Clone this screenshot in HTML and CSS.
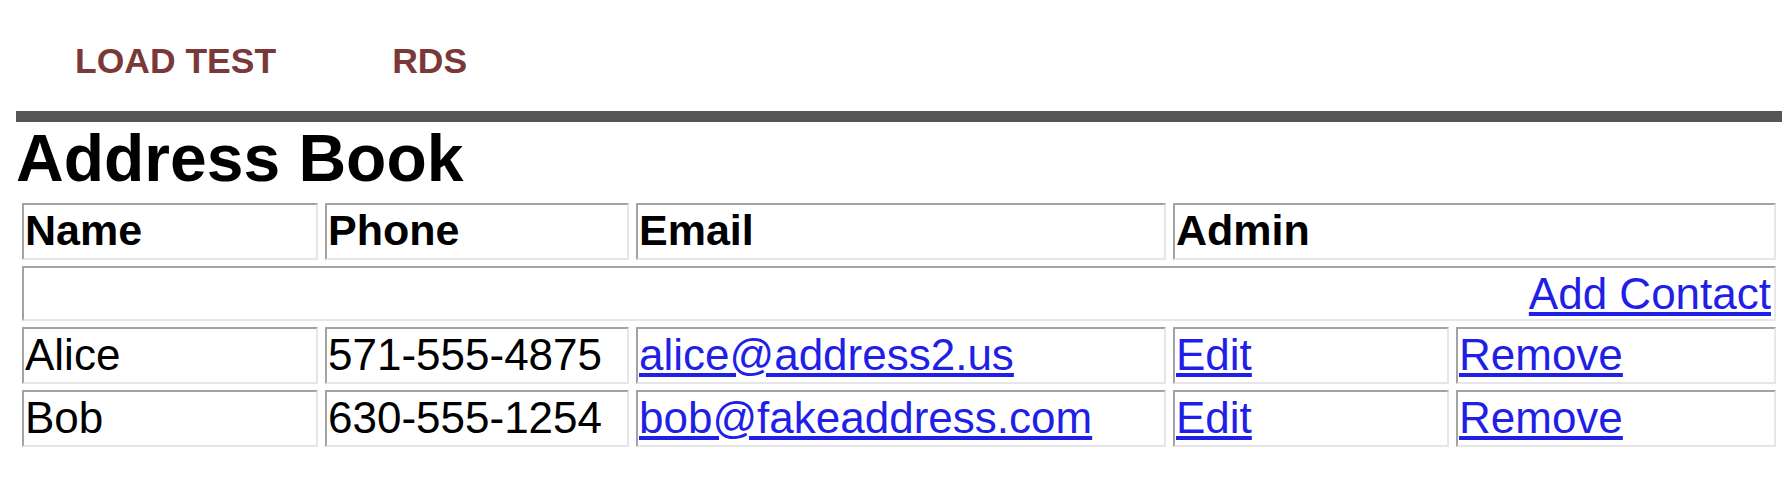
FILE: index.html
```html
<!DOCTYPE html>
<html>
<head>
<meta charset="utf-8">
<title>Address Book</title>
<link rel="stylesheet" href="styles.css">
</head>
<body>
<nav class="topbar">
  <a class="navlink" href="#">LOAD TEST</a>
  <a class="navlink" href="#">RDS</a>
</nav>
<div class="rule"></div>
<h1 class="title">Address Book</h1>
<table class="book">
  <colgroup>
    <col class="c-name">
    <col class="c-phone">
    <col class="c-email">
    <col class="c-edit">
    <col class="c-remove">
  </colgroup>
  <thead>
    <tr>
      <th>Name</th>
      <th>Phone</th>
      <th>Email</th>
      <th colspan="2">Admin</th>
    </tr>
  </thead>
  <tbody>
    <tr>
      <td colspan="5" class="add"><a href="#">Add Contact</a></td>
    </tr>
    <tr>
      <td>Alice</td>
      <td>571-555-4875</td>
      <td><a href="#">alice@address2.us</a></td>
      <td><a href="#">Edit</a></td>
      <td><a href="#">Remove</a></td>
    </tr>
    <tr>
      <td>Bob</td>
      <td>630-555-1254</td>
      <td><a href="#">bob@fakeaddress.com</a></td>
      <td><a href="#">Edit</a></td>
      <td><a href="#">Remove</a></td>
    </tr>
  </tbody>
</table>
</body>
</html>
```

FILE: styles.css
```css
html, body {
  margin: 0;
  padding: 0;
  background: #ffffff;
}

body {
  font-family: "Liberation Sans", Arial, sans-serif;
  color: #000;
}

.topbar {
  display: flex;
  gap: 116px;
  padding: 41px 0 30px 75px;
}

.navlink {
  font-size: 35.5px;
  line-height: 40px;
  font-weight: bold;
  color: #7a3838;
  text-decoration: none;
}

.rule {
  height: 11px;
  background: #555555;
  margin: 0 2px 0 16px;
}

.title {
  margin: 3px 0 0 16px;
  font-size: 66px;
  line-height: 66px;
  font-weight: bold;
}

.book {
  margin: 6px 0 0 15px;
  width: 1768px;
  table-layout: fixed;
  border-collapse: separate;
  border-spacing: 7px 6px;
  font-size: 44px;
}

.c-name { width: 296px; }
.c-phone { width: 304px; }
.c-email { width: 530px; }
.c-edit { width: 276px; }
.c-remove { width: 320px; }

.book th,
.book td {
  border-style: solid;
  border-width: 2px;
  border-color: #a3a3a3 #e6e6e6 #e6e6e6 #a3a3a3;
  padding: 1px 1px 3px 1px;
  text-align: left;
  white-space: nowrap;
  overflow: hidden;
  line-height: 49px;
}

.book th {
  font-weight: bold;
  font-size: 43px;
}

.book td.add {
  text-align: right;
  padding: 1px 3px 1px 1px;
}

.book a {
  color: #1f1fe6;
  text-decoration: underline;
}
```
